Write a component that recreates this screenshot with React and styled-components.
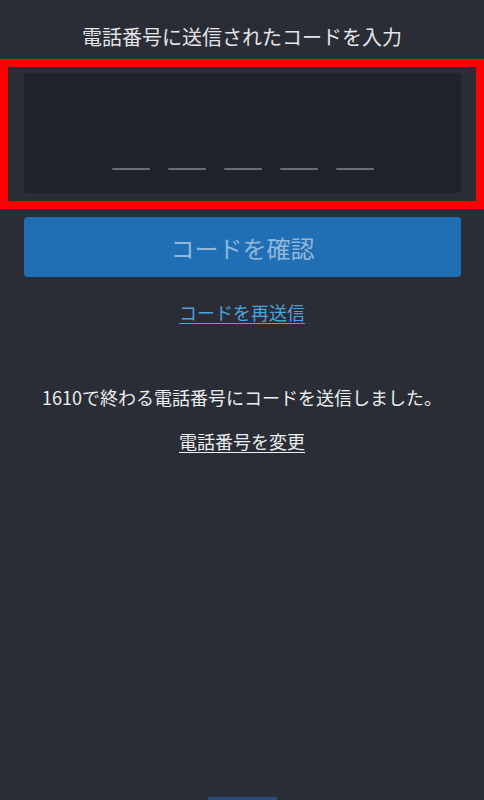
import React from 'react';
import styled, { createGlobalStyle } from 'styled-components';

const GlobalStyle = createGlobalStyle`
  html, body {
    margin: 0;
    padding: 0;
    background: #2a2d35;
  }
  * {
    box-sizing: border-box;
  }
`;

const Page = styled.div`
  min-height: 100vh;
  display: flex;
  flex-direction: column;
  align-items: center;
  background: #2a2d35;
  font-family: 'Noto Sans CJK JP', 'Noto Sans', sans-serif;
  color: #e6e7ea;
`;

const Title = styled.h1`
  margin: 25px 0 10px;
  font-size: 20px;
  line-height: 24px;
  font-weight: 400;
  text-align: center;
  color: #e4e5e8;
`;

const Highlight = styled.div`
  align-self: stretch;
  border: 8px solid #ff0000;
  padding: 6px 15px 8px 16px;
`;

const CodeBox = styled.div`
  height: 120px;
  background: #20232b;
  border-radius: 3px;
  display: flex;
  align-items: flex-end;
  justify-content: center;
  gap: 18px;
  padding-bottom: 23px;
`;

const Slot = styled.span`
  width: 38px;
  height: 2px;
  background: #6a6e77;
  border-radius: 1px;
`;

const Confirm = styled.button`
  align-self: stretch;
  margin: 8px 23px 0 24px;
  height: 60px;
  border: none;
  border-radius: 4px;
  background: #206fb4;
  color: #90b7dc;
  font-family: inherit;
  font-size: 24px;
  font-weight: 400;
  cursor: default;
`;

const TextLink = styled.a`
  display: block;
  margin-top: ${p => p.$top}px;
  font-size: 18px;
  line-height: 26px;
  color: ${p => p.$color};
  text-decoration: underline;
  text-underline-offset: 3px;
  cursor: pointer;
`;

const Notice = styled.p`
  margin: 59px 0 0;
  font-size: 18px;
  line-height: 26px;
  text-align: center;
  color: #eceef0;
`;

const HomeBar = styled.div`
  margin-top: auto;
  width: 69px;
  height: 3px;
  background: #2b4b7a;
`;

export default function App() {
  return (
    <Page>
      <GlobalStyle />
      <Title>電話番号に送信されたコードを入力</Title>
      <Highlight>
        <CodeBox>
          {[0, 1, 2, 3, 4].map(i => (
            <Slot key={i} />
          ))}
        </CodeBox>
      </Highlight>
      <Confirm disabled>コードを確認</Confirm>
      <TextLink $top={22} $color="#4aa2de">コードを再送信</TextLink>
      <Notice>1610で終わる電話番号にコードを送信しました。</Notice>
      <TextLink $top={18} $color="#eceef0">電話番号を変更</TextLink>
      <HomeBar />
    </Page>
  );
}
